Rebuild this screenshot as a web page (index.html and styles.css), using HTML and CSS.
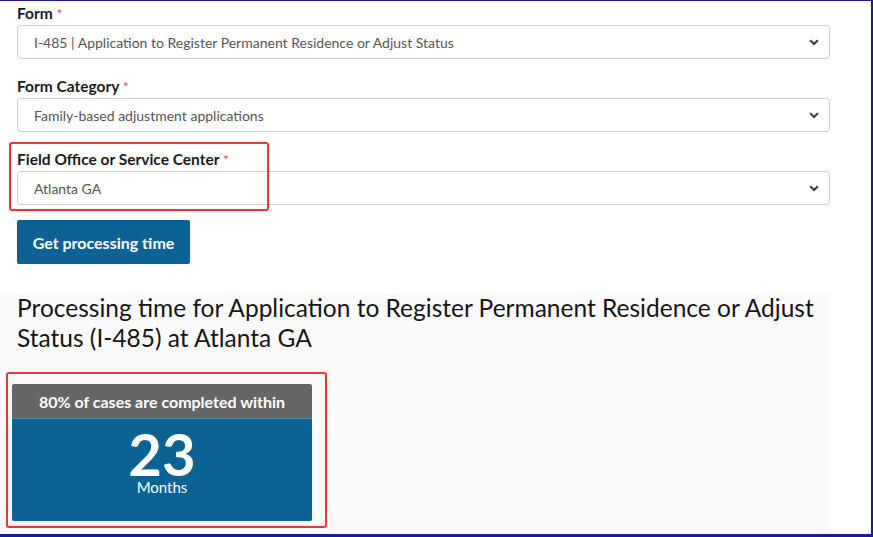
FILE: index.html
```html
<!DOCTYPE html>
<html lang="en">
<head>
<meta charset="utf-8">
<title>Processing time</title>
<link rel="stylesheet" href="styles.css">
</head>
<body>
<div class="frame">
  <div class="form-area">
    <div class="field">
      <div class="label">Form <span class="req">*</span></div>
      <div class="select"><span>I-485 | Application to Register Permanent Residence or Adjust Status</span><svg class="chev" width="10" height="7" viewBox="0 0 10 7"><path d="M1.2 1.3 L5 5 L8.8 1.3" fill="none" stroke="#3d3d3d" stroke-width="2.2"/></svg></div>
    </div>
    <div class="field">
      <div class="label">Form Category <span class="req">*</span></div>
      <div class="select"><span>Family-based adjustment applications</span><svg class="chev" width="10" height="7" viewBox="0 0 10 7"><path d="M1.2 1.3 L5 5 L8.8 1.3" fill="none" stroke="#3d3d3d" stroke-width="2.2"/></svg></div>
    </div>
    <div class="field highlight-wrap">
      <div class="label">Field Office or Service Center <span class="req">*</span></div>
      <div class="select"><span>Atlanta GA</span><svg class="chev" width="10" height="7" viewBox="0 0 10 7"><path d="M1.2 1.3 L5 5 L8.8 1.3" fill="none" stroke="#3d3d3d" stroke-width="2.2"/></svg></div>
      <div class="mark mark-field"></div>
    </div>
    <button class="btn">Get processing time</button>
  </div>
  <section class="results">
    <h2 class="heading">Processing time for Application to Register Permanent Residence or Adjust Status (I-485) at Atlanta GA</h2>
    <div class="card-wrap">
      <div class="card">
        <div class="card-head">80% of cases are completed within</div>
        <div class="card-body">
          <div class="num">23</div>
          <div class="unit">Months</div>
        </div>
      </div>
      <div class="mark mark-card"></div>
    </div>
  </section>
</div>
</body>
</html>
```
FILE: styles.css
```css
* { box-sizing: border-box; }
html, body { margin: 0; padding: 0; background: #fff; }
body { font-family: Lato, "Open Sans", sans-serif; color: #1b1b1b; }
.frame {
  width: 873px;
  height: 537px;
  border-top: 1px solid #1a1a9e;
  border-right: 2px solid #1a1a9e;
  border-bottom: 3px solid #1a1a9e;
  overflow: hidden;
  display: flex;
  flex-direction: column;
}
.form-area { padding: 2px 0 0 17px; width: 830px; }
.field { position: relative; margin-bottom: 17px; }
.label { font-size: 15.5px; font-weight: 700; line-height: 20px; height: 20px; margin-bottom: 2px; color: #1b1b1b; }
.req { color: #d9534f; font-weight: 400; font-size: 14px; }
.select {
  height: 34px;
  border: 1px solid #cfcfcf;
  border-radius: 4px;
  background: #fff;
  display: flex;
  align-items: center;
  justify-content: space-between;
  padding: 0 10px 0 16px;
  font-size: 14px;
  color: #555;
}
.chev { display: block; }
.highlight-wrap { margin-bottom: 15px; }
.mark { position: absolute; border: 2.5px solid #e53935; border-radius: 3px; pointer-events: none; }
.mark-field { left: -8px; top: -7px; width: 260px; height: 69px; }
.btn {
  display: block;
  height: 44px;
  width: 173px;
  background: #0b6294;
  color: #fff;
  border: 0;
  border-radius: 2px;
  font-family: inherit;
  font-size: 16px;
  font-weight: 700;
  padding: 0;
}
.results {
  margin-top: 29px;
  width: 830px;
  flex: 1;
  background: #fafafa;
  padding: 0 0 0 17px;
}
.heading {
  margin: 0;
  font-size: 24.5px;
  font-weight: 400;
  line-height: 30px;
  color: #161616;
}
.card-wrap { position: relative; margin: 31px 0 0 -5px; width: 300px; }
.card { width: 300px; border-radius: 2px; overflow: hidden; }
.card-head {
  background: #666;
  color: #fff;
  height: 35px;
  font-size: 16px;
  font-weight: 700;
  display: flex;
  align-items: center;
  justify-content: center;
  border-bottom: 1px solid #4d8bb0;
}
.card-body {
  background: #0b6294;
  color: #fff;
  height: 102px;
  text-align: center;
  padding-top: 12px;
}
.num { font-size: 58px; font-weight: 700; line-height: 46px; }
.unit { font-size: 15px; line-height: 16px; margin-top: 2px; }
.mark-card { left: -6px; top: -12px; width: 321px; height: 156px; }
```
